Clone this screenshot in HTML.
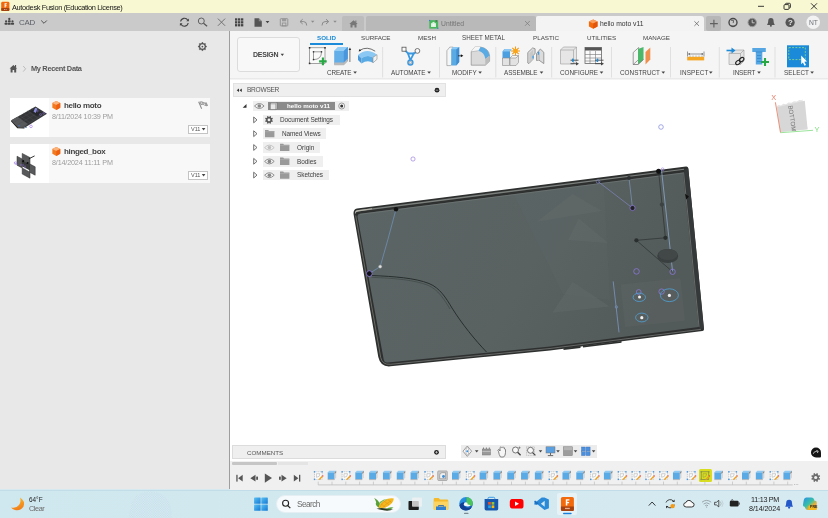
<!DOCTYPE html>
<html><head><meta charset="utf-8">
<style>
*{margin:0;padding:0;box-sizing:border-box}
html,body{width:828px;height:518px;overflow:hidden;background:#fff;font-family:"Liberation Sans",sans-serif;}
.a{position:absolute}
.t{position:absolute;white-space:nowrap;line-height:1;will-change:transform}
#title{left:0;top:0;width:828px;height:13px;background:#f8f8d3}
#tool{left:0;top:13px;width:828px;height:18px;background:#cacaca}
#left{left:0;top:31px;width:229px;height:459px;background:#e8e8e8}
#ldiv{left:229px;top:31px;width:1.200px;height:459px;background:#9e9e9e}
#ribbon{left:230px;top:31px;width:598px;height:46.500px;background:#f5f5f5}
#task{left:0;top:489px;width:828px;height:29px;background:#d6e9f0}
</style></head><body>
<div class="a" id="title"></div>
<div class="a" id="tool"></div>
<div class="a" id="left"></div>
<div class="a" id="ldiv"></div>
<div class="a" id="ribbon"></div>
<div class="a" id="task"></div>
<svg class="a" style="left:0;top:0" width="828" height="14" viewBox="0 0 828 14">
<rect x="1.2" y="1.8" width="8.2" height="9.2" rx="1.4" fill="#f2690d"/>
<rect x="1.2" y="8" width="8.2" height="3" rx="0.8" fill="#a5410f"/>
<path d="M4.6 3.2h2.2v1h-1.2v1h1v1h-1v1.4h-1z" fill="#fff"/>
<rect x="4" y="9" width="1" height="0.9" fill="#e8b090"/><rect x="5.6" y="9" width="1" height="0.9" fill="#e8b090"/>
<path d="M758 6.3h6" stroke="#222" stroke-width="0.9" fill="none"/>
<rect x="784" y="4.6" width="5" height="4.8" rx="1" fill="none" stroke="#222" stroke-width="0.9"/>
<path d="M785.5 4.4v-0.3q0-0.8 0.8-0.8h3.2q0.9 0 0.9 0.9v3q0 0.8-0.8 0.8h-0.4" fill="none" stroke="#222" stroke-width="0.9"/>
<path d="M811 3.3l6 6M817 3.3l-6 6" stroke="#222" stroke-width="0.9" fill="none"/>
</svg>
<span class="t" style="left:12px;top:3.5px;font-size:7.4px;font-weight:400;color:#151515;letter-spacing:-0.341px;">Autodesk Fusion (Education License)</span>

<div class="a" style="left:341.5px;top:16px;width:22.5px;height:15px;background:#bcbcbc;border-radius:2px 2px 0 0"></div>
<div class="a" style="left:366px;top:16px;width:169.5px;height:15px;background:#b9b9b9;border-radius:2px 2px 0 0"></div>
<div class="a" style="left:536px;top:16px;width:168px;height:15px;background:#f3f3f3;border-radius:2px 3px 0 0"></div>
<div class="a" style="left:706.3px;top:16.3px;width:15px;height:14.3px;background:#b7b7b7;border-radius:2px"></div>
<svg class="a" style="left:0;top:13px" width="828" height="18" viewBox="0 13 828 18">
<!-- people icon -->
<g fill="#474747">
<circle cx="9.300" cy="19" r="1.150"/><rect x="7.900" y="20.300" width="2.800" height="2.100" rx="0.700"/>
<circle cx="6.100" cy="21.400" r="1.100"/><rect x="4.500" y="22.700" width="3.200" height="2.100" rx="0.700"/>
<rect x="7.900" y="22.900" width="2.800" height="1.900" rx="0.500"/>
<circle cx="12.500" cy="21.400" r="1.100"/><rect x="10.900" y="22.700" width="3.200" height="2.100" rx="0.700"/>
</g>
<path d="M41.2 20.5l2.8 2.8l2.800-2.800" fill="none" stroke="#505050" stroke-width="1"/>
<!-- refresh -->
<g fill="none" stroke="#444" stroke-width="1.1">
<path d="M180.6 21.5a3.9 3.9 0 0 1 7.2-1.3"/><path d="M188.2 23a3.9 3.9 0 0 1-7.2 1.3"/>
</g>
<path d="M188.9 18.6v2.6h-2.6z M179.9 25.9v-2.6h2.6z" fill="#444"/>
<!-- search -->
<circle cx="201.3" cy="21" r="3" fill="none" stroke="#555" stroke-width="0.9"/>
<path d="M203.5 23.3l3.6 3" stroke="#555" stroke-width="1.2"/>
<!-- X -->
<path d="M217.9 18.6l7.2 7.2M225.1 18.6l-7.2 7.2" stroke="#686868" stroke-width="0.9"/>
<!-- grid -->
<g fill="#444">
<rect x="235" y="18.3" width="2.3" height="2.3"/><rect x="238" y="18.3" width="2.3" height="2.3"/><rect x="241" y="18.3" width="2.3" height="2.3"/>
<rect x="235" y="21.2" width="2.3" height="2.3"/><rect x="238" y="21.2" width="2.3" height="2.3"/><rect x="241" y="21.2" width="2.3" height="2.3"/>
<rect x="235" y="24.1" width="2.3" height="2.3"/><rect x="238" y="24.1" width="2.3" height="2.3"/><rect x="241" y="24.1" width="2.3" height="2.3"/>
</g>
<!-- file -->
<path d="M254.5 18.2h4.3l3 3v5.6h-7.3z" fill="#555"/><path d="M258.8 18.2v3h3z" fill="#8a8a8a"/>
<path d="M265.6 21l1.9 2.2l1.9-2.2z" fill="#444"/>
<!-- save -->
<rect x="280.3" y="18.7" width="7.5" height="7.2" rx="0.6" fill="none" stroke="#8e8e8e" stroke-width="0.9"/>
<rect x="282" y="18.7" width="4.2" height="2.6" fill="#9a9a9a"/><rect x="282.3" y="23" width="3.6" height="2.9" fill="none" stroke="#8e8e8e" stroke-width="0.8"/>
<!-- undo -->
<path d="M302.7 19.2l-2.7 2.4l2.7 2.4M300.3 21.6h3.4q3 0 3 3.9" fill="none" stroke="#8a8a8a" stroke-width="1"/>
<path d="M311 20.8l1.7 2l1.7-2z" fill="#8a8a8a"/>
<!-- redo -->
<path d="M326 19.2l2.7 2.4l-2.7 2.4M328.4 21.6h-3.4q-3 0-3 3.9" fill="none" stroke="#8a8a8a" stroke-width="1"/>
<path d="M333.3 20.8l1.7 2l1.7-2z" fill="#8a8a8a"/>
<!-- home tab icon -->
<path d="M349.3 24l4.2-3.7l4.2 3.7h-1.2v3.5h-2v-2.3h-2v2.3h-2v-3.5z" fill="#777"/><rect x="355.3" y="20.5" width="1.1" height="2" fill="#777"/>
<!-- untitled icon -->
<rect x="429.3" y="20.2" width="8.8" height="8.4" fill="#49b75e"/>
<path d="M431 27v-3.5l2.5-1.8l2.5 1.8v3.5z" fill="#d8f0dc"/><rect x="432.6" y="24" width="1.8" height="1.8" fill="#f8f8f8"/>
<rect x="429" y="19.9" width="1.2" height="1.2" fill="#3b7fd0"/><rect x="437.2" y="27.6" width="1.2" height="1.2" fill="#3b7fd0"/><rect x="435.5" y="20.2" width="1.6" height="1.6" fill="#666"/>
<path d="M525 21l4.8 4.8M529.8 21l-4.8 4.8" stroke="#7a7a7a" stroke-width="0.7"/>
<!-- active tab cube -->
<path d="M593.2 19.4l4.3 2v5l-4.3 2.3l-4.3-2.3v-5z" fill="#f26a0c"/>
<path d="M593.2 19.4l4.3 2l-4.3 2.2l-4.3-2.2z" fill="#f9a060"/><path d="M593.2 23.6l4.3-2.2v5l-4.3 2.3z" fill="#e2550a"/>
<path d="M694.4 21.3l4.6 4.6M699 21.3l-4.6 4.6" stroke="#555" stroke-width="0.7"/>
<!-- plus -->
<path d="M710 23.600h7.800M713.900 19.700v7.800" stroke="#606060" stroke-width="1.150"/>
<!-- extension icon -->
<circle cx="733" cy="22.500" r="4" fill="none" stroke="#484848" stroke-width="1.400"/>
<path d="M731 20.2l2.6 0.3l-0.4 2.6M735.8 24.5a3 3 0 0 1-4.5 1" fill="none" stroke="#555" stroke-width="0.9"/>
<!-- clock -->
<circle cx="752.2" cy="22.5" r="4.2" fill="#555" stroke="#9a9a9a" stroke-width="1"/>
<path d="M752.2 19.8v3h2.4" fill="none" stroke="#cfcfcf" stroke-width="0.9"/>
<!-- bell -->
<path d="M770.9 18q2.7 0 2.7 3.2q0 2.5 1.2 3.7h-7.8q1.2-1.2 1.2-3.7q0-3.2 2.7-3.2z" fill="#555"/><circle cx="770.9" cy="25.8" r="1" fill="#555"/>
<!-- help -->
<circle cx="790.1" cy="22.4" r="4.6" fill="#555"/>
<!-- NT -->
<circle cx="813.2" cy="22.2" r="6.8" fill="#f2f2f2"/>
</svg>
<span class="t" style="left:787.7px;top:19.2px;font-size:7.86px;font-weight:700;color:#ececec;">?</span>
<span class="t" style="left:808.8px;top:19.8px;font-size:6.75px;font-weight:400;color:#6e7378;">NT</span>
<span class="t" style="left:19px;top:18.6px;font-size:7.9px;font-weight:400;color:#5a5f66;letter-spacing:-0.191px;">CAD</span>
<span class="t" style="left:441px;top:21.3px;font-size:6.78px;font-weight:400;color:#747474;">Untitled</span>
<span class="t" style="left:600px;top:21.3px;font-size:6.77px;font-weight:400;color:#333;">hello moto v11</span>

<div class="a" style="left:10px;top:98px;width:200px;height:39px;background:#f8f8f8"></div>
<div class="a" style="left:10px;top:98px;width:39px;height:39px;background:#fff"></div>
<div class="a" style="left:10px;top:144px;width:200px;height:39px;background:#f8f8f8"></div>
<div class="a" style="left:10px;top:144px;width:39px;height:39px;background:#fff"></div>
<div class="a" style="left:187.5px;top:124.5px;width:20px;height:9.5px;background:#fff;border:0.8px solid #c4c4c4"></div>
<div class="a" style="left:187.5px;top:170.5px;width:20px;height:9.5px;background:#fff;border:0.8px solid #c4c4c4"></div>
<svg class="a" style="left:0;top:31px" width="230" height="160" viewBox="0 31 230 160">
<!-- gear -->
<path d="M202.40 42.10L203.64 43.61L205.58 43.42L205.39 45.36L206.90 46.60L205.39 47.84L205.58 49.78L203.64 49.59L202.40 51.10L201.16 49.59L199.22 49.78L199.41 47.84L197.90 46.60L199.41 45.36L199.22 43.42L201.16 43.61z" fill="#505050" stroke="#505050" stroke-width="0.3" stroke-linejoin="round"/><circle cx="202.4" cy="46.6" r="2.25" fill="#e8e8e8"/><circle cx="202.4" cy="46.6" r="0.90" fill="#505050"/>
<!-- home -->
<path d="M9.6 68.6l3.8-3.6l3.8 3.6h-1v3.8h-2v-2.4h-1.6v2.4h-2v-3.8z" fill="#555"/><rect x="15" y="65" width="1.1" height="2.2" fill="#555"/>
<path d="M23.2 66l2.4 2.8l-2.4 2.8" fill="none" stroke="#b0b0b0" stroke-width="0.8"/>
<!-- cubes -->
<g id="cube1" transform="translate(56.300 105.500) scale(0.900) translate(-56.300 -105.400)"><path d="M56.3 100.4l4.4 2.1v5.4l-4.4 2.5l-4.4-2.5v-5.4z" fill="#f47a20"/>
<path d="M56.3 100.4l4.4 2.1l-4.4 2.3l-4.4-2.3z" fill="#fbb37c"/><path d="M56.3 104.8l4.4-2.3v5.4l-4.4 2.5z" fill="#ee5f10"/></g>
<use href="#cube1" y="46"/>
<!-- flag -->
<path d="M198.2 102l0.9-0.4l3 7l-0.9 0.4z" fill="#888"/>
<path d="M199.3 101.8q2-1.2 3.6 0q1.6 1.2 3.6 0.4l1.6 3.6q-2 0.9-3.6-0.3q-1.6-1.2-3.6-0.2z" fill="#9a9a9a"/>
<path d="M200.6 102.2l1.4 0.2l0.6 1.4l-1.5-0.1zM203.3 103.2l1.6 0.6l0.6 1.4l-1.5-0.5z" fill="#e4e4e4"/>
<!-- dropdown arrows -->
<path d="M201.8 128l1.8 2.4l1.8-2.4z" fill="#444"/><path d="M201.8 174l1.8 2.4l1.8-2.4z" fill="#444"/>
<!-- thumb 1 -->
<path d="M11.400 120.200L35.500 106.400L47 113.800L25 127.600L18 127.300z" fill="#343537"/>
<path d="M11.400 120.200L17.500 116.700l10.500 7.200l-4 3.500l-6-0.300z" fill="#58595b"/>
<path d="M11.400 120.200l6.600 7.100l6 0.300l0.600 0.800l-7.300-0.200l-6.300-7z" fill="#1e1e1e"/>
<g stroke="#4c4d50" stroke-width="0.450" fill="none"><path d="M19.500 115.500l10.500 7.200M23.500 113.200l10.500 7.200M27.500 110.900l10.500 7.200M31.500 108.600l10.500 7.200M14.500 122l21-12.200M18 124.500l22-12.800M22 127l22-12.800"/></g>
<path d="M30 111.500l5-3l7 4.500l-5 3z" fill="#26272a"/>
<path d="M33.500 111.500l1.700-3.700l2.200 0.700l-1.700 4.400z" fill="#8c8fd8"/>
<circle cx="40.500" cy="114.500" r="1" fill="none" stroke="#8a6fd6" stroke-width="0.500"/><circle cx="43.800" cy="113.300" r="0.900" fill="none" stroke="#8a6fd6" stroke-width="0.500"/><circle cx="37.500" cy="111" r="0.800" fill="none" stroke="#8a6fd6" stroke-width="0.500"/>
<circle cx="31" cy="126.400" r="1.300" fill="none" stroke="#a070e8" stroke-width="0.600"/>
<circle cx="19" cy="125.800" r="0.800" fill="#4a6fb0"/><circle cx="26" cy="127.400" r="0.700" fill="#4a6fb0"/>
<!-- thumb 2 -->
<path d="M21.500 160l8.500 4.500v6l-8.500-4.500z" fill="#3a3b3d"/>
<g fill="#58595b" stroke="#2a2a2a" stroke-width="0.500">
<path d="M22.200 153.400l7.800 4.200v7.200l-7.800-4.200z"/>
<path d="M17 156.200l5.200 2.800v9l-5.200-2.800z"/>
<path d="M29.500 163.800l5.700 3v8.400l-5.700-3z"/>
<path d="M22.200 168l7.800 4.200v6l-7.800-4.200z"/>
</g>
<path d="M28.800 158.800l5.800-2.900" stroke="#1c1c1c" stroke-width="0.900"/>
<circle cx="23.200" cy="161.200" r="1.100" fill="#0c0c0c"/><circle cx="27.600" cy="163" r="1.100" fill="#0c0c0c"/>
<path d="M14.500 162q0.500 2.500 3 2.500M20 165h4M25 165.500v3" stroke="#9a78e8" stroke-width="0.600" fill="none"/>
<circle cx="15.500" cy="163" r="1.300" fill="none" stroke="#a080f0" stroke-width="0.500"/>
</svg>
<span class="t" style="left:31px;top:65px;font-size:7.4px;font-weight:700;color:#555;letter-spacing:-0.316px;">My Recent Data</span>
<span class="t" style="left:64px;top:102.2px;font-size:8px;font-weight:700;color:#444;letter-spacing:-0.316px;">hello moto</span>
<span class="t" style="left:51.8px;top:113.3px;font-size:7.2px;font-weight:400;color:#9c9c9c;letter-spacing:-0.183px;">8/11/2024 10:39 PM</span>
<span class="t" style="left:64px;top:148.2px;font-size:8px;font-weight:700;color:#444;letter-spacing:-0.366px;">hinged_box</span>
<span class="t" style="left:51.8px;top:159.3px;font-size:7.2px;font-weight:400;color:#9c9c9c;letter-spacing:-0.164px;">8/14/2024 11:11 PM</span>
<span class="t" style="left:190.8px;top:127.2px;font-size:5.51px;font-weight:400;color:#555;">V11</span>
<span class="t" style="left:190.8px;top:173.2px;font-size:5.51px;font-weight:400;color:#555;">V11</span>

<div class="a" style="left:230px;top:77.500px;width:598px;height:2.800px;background:linear-gradient(#f0f0f0,#e6e6e6 40%,#fdfdfd)"></div>
<div class="a" style="left:237px;top:37px;width:62.5px;height:35px;background:#f8f8f8;border:0.8px solid #dcdcdc;border-radius:3px"></div>
<div class="a" style="left:309.6px;top:43px;width:33.3px;height:1.9px;background:#1b8ad8"></div>
<svg class="a" style="left:230px;top:31px" width="598" height="50" viewBox="230 31 598 50">
<g stroke="#dedede" stroke-width="0.9">
<path d="M382.6 47v30.500M439.500 47v30.500M495.800 47v30.500M551.700 47v30.500M611.500 47v30.500M670.500 47v30.500M719.300 47v30.500M775 47v30.500"/>
</g>
<g fill="#444">
<path d="M280.6 53.8l1.7 2.1l1.7-2.1z"/>
<path d="M353.3 71.500l1.800 2.200l1.800-2.200z"/><path d="M427.3 71.500l1.800 2.200l1.800-2.200z"/><path d="M478.3 71.500l1.800 2.200l1.800-2.200z"/>
<path d="M539.7 71.500l1.800 2.200l1.800-2.200z"/><path d="M599.7 71.500l1.800 2.200l1.800-2.200z"/><path d="M661.5 71.500l1.800 2.200l1.800-2.200z"/>
<path d="M709.0 71.500l1.800 2.200l1.800-2.200z"/><path d="M757.2 71.500l1.800 2.200l1.800-2.200z"/><path d="M810.3 71.500l1.800 2.200l1.800-2.200z"/>
</g>
<!-- 1 create sketch -->
<rect x="309.600" y="47.800" width="15.400" height="15.600" fill="#fafafa" stroke="#6a6a6a" stroke-width="0.600"/>
<g fill="#333"><rect x="308.8" y="47" width="1.6" height="1.6"/><rect x="324.2" y="47" width="1.6" height="1.6"/><rect x="308.8" y="62.6" width="1.6" height="1.6"/></g>
<path d="M313.500 51.800h8q0 7.800-8 7.800z" fill="none" stroke="#666" stroke-width="0.650"/><g fill="#333"><rect x="312.800" y="51.100" width="1.400" height="1.400"/><rect x="320.800" y="51.100" width="1.400" height="1.400"/><rect x="312.800" y="58.900" width="1.400" height="1.400"/></g>
<path d="M322.9 57.6v7.6M319.1 61.4h7.6" stroke="#27a844" stroke-width="2.1"/>
<!-- 2 extrude -->
<path d="M334.200 51l4-4h9.600v13.600l-4 4h-9.600z" fill="#62aee8"/>
<path d="M334.200 51l4-4h9.600l-4 4z" fill="#94cef6"/><path d="M343.800 51l4-4v13.600l-4 4z" fill="#4a96dc"/>
<path d="M334.2 62.6h9.6l4-4v2.6l-4 4h-9.6z" fill="#b9b9b9"/>
<path d="M349.9 49v13" stroke="#444" stroke-width="0.7"/><path d="M348.6 50l1.3-2.4l1.3 2.4z" fill="#333"/>
<!-- 3 revolve -->
<path d="M358 55Q367 47.200 377 54.700L373 57.400Q367.500 54 361.500 58.200z" fill="#8cc8f4"/>
<path d="M358 55L361.500 58.200V63.600L358 60z" fill="#4a98d8"/>
<path d="M361.500 58.200Q367.500 54 373 57.400V62.800Q367.500 59.400 361.500 63.600z" fill="#5aaae4"/>
<path d="M373 57.400L377 54.700V59.300L373 62.800z" fill="#f2f2f2" stroke="#8a8a8a" stroke-width="0.600"/>
<path d="M359.800 50.300Q367 45.800 375.200 51.200" fill="none" stroke="#333" stroke-width="0.700"/><path d="M358.600 51.400l1-2.500l1.600 1.900z" fill="#222"/>
<!-- 4 automate -->
<g fill="none" stroke="#3a98e0" stroke-width="1.800" stroke-linejoin="round" stroke-linecap="round"><path d="M405.300 50.600L408.300 53.600M416 52.200L413.500 53.600"/><path d="M408 53.500L413.800 53.300L410.400 60.200z" fill="#fafafa"/></g>
<rect x="402" y="47.200" width="4" height="4" fill="#fafafa" stroke="#555" stroke-width="0.800"/>
<circle cx="417.400" cy="50.900" r="2.400" fill="#fafafa" stroke="#555" stroke-width="0.800"/>
<circle cx="410.400" cy="62.500" r="2.500" fill="#e4e8ec" stroke="#3a98e0" stroke-width="1.400"/><circle cx="410.400" cy="62.500" r="1.200" fill="none" stroke="#777" stroke-width="0.500"/>
<!-- 5 press pull -->
<path d="M446.900 50.700l2.900-3.600h3.400v15.500l-2.600 3h-3.700z" fill="#f6f6f6" stroke="#8a8a8a" stroke-width="0.600"/>
<path d="M451.200 49.300l2-2.200h6v15l-2.900 3.400h-5.100z" fill="#5aaae4"/><path d="M456.300 49.300l2.900-2.200v15l-2.900 3.400z" fill="#3f8ed2"/><path d="M451.200 49.300l2-2.200h6l-2.900 2.200z" fill="#8cc8f4"/>
<path d="M458 55.800h3.500" stroke="#222" stroke-width="0.800"/><path d="M460.800 54.300l2.500 1.500l-2.500 1.500z" fill="#111"/>
<!-- 6 fillet -->
<path d="M471.200 51.800L474.800 47.100H480.600Q488.800 48.500 489.600 55.800V61.200L485.300 65.200H471.200z" fill="#dadada" stroke="#808080" stroke-width="0.600"/>
<path d="M471.200 51.800L474.800 47.100H480.600L478.400 50.700z" fill="#f6f6f6"/>
<path d="M480.600 47.100Q488.800 48.500 489.600 55.800L485.300 59Q484.800 52.800 478.400 50.700z" fill="#5aaae4"/>
<path d="M485.300 59L489.600 55.800V61.200L485.300 65.200z" fill="#bcbcbc"/>
<path d="M471.200 51.800L478.400 50.700" stroke="#999" stroke-width="0.500" fill="none"/>
<!-- 7 new component -->
<path d="M502.500 51.500l2-2.500h7l-1.500 2.500v8h-7.500z" fill="#4a9fe0"/><path d="M502.500 51.500l2-2.500h7l-1.500 2.500z" fill="#8cc6f2"/>
<path d="M502.500 58h7v7.500h-7z M510 58h6l2.500-2.500v7l-2.500 3h-6z" fill="#e2e2e2" stroke="#8a8a8a" stroke-width="0.6"/>
<path d="M510 58l2.500-2.500h6" fill="none" stroke="#8a8a8a" stroke-width="0.6"/>
<g stroke="#f59a12" stroke-width="1.100"><path d="M515.500 46.500v9M511 51h9M512.300 47.800l6.400 6.400M518.700 47.800l-6.400 6.400"/></g><circle cx="515.500" cy="51" r="2.300" fill="#f9a51a"/>
<!-- 8 joint -->
<path d="M527.800 52.500L532.700 47.900L535.100 48.800V53.600L533 55.500V59.300L528.900 63.600L527.800 63z" fill="#dcdcdc" stroke="#858585" stroke-width="0.800" stroke-linejoin="round"/>
<path d="M529.300 53.200L533.300 49.400V59L529.300 62.800z" fill="#c8c8c8"/>
<path d="M536.500 53.600L540.300 49L543.800 52.300V63.600L538.900 60.100L536.500 60.500z" fill="#dcdcdc" stroke="#858585" stroke-width="0.800" stroke-linejoin="round"/>
<path d="M537.300 54.500L540 51.200V60L537.300 59.800z" fill="#c4c4c4"/>
<path d="M533.100 55.800v2.800M538.400 51.800v3" stroke="#3a9be8" stroke-width="1.300"/>
<!-- 9 configure -->
<path d="M560.500 50l3-3h13v14l-3 3h-13z" fill="#e6e6e6" stroke="#9a9a9a" stroke-width="0.600"/><path d="M560.500 50h13v14M573.500 50l3-3" fill="none" stroke="#9a9a9a" stroke-width="0.600"/>
<path d="M570.500 60.200h8M570.500 63.700h6" stroke="#444" stroke-width="0.900"/><path d="M576 61.900l3 1.800l-3 1.800z" fill="#444"/><rect x="572" y="58.500" width="1.600" height="3.400" rx="0.600" fill="#1b8ad8"/>
<!-- 10 configure table -->
<rect x="585" y="47.500" width="16.500" height="16" fill="#fafafa" stroke="#666" stroke-width="0.800"/><rect x="585" y="47.500" width="16.500" height="3" fill="#555"/>
<path d="M585 54.500h16.500M585 58h16.500M585 61h12M590 51v12.500M595.500 51v12.500" stroke="#777" stroke-width="0.600"/>
<path d="M595 60.200h8.500M595 63.700h6.500" stroke="#444" stroke-width="0.900"/><path d="M601 61.900l3 1.800l-3 1.800z" fill="#444"/><rect x="596.700" y="58.500" width="1.600" height="3.400" rx="0.600" fill="#1b8ad8"/>
<!-- 11 construct -->
<path d="M633.200 52.500l5.500-5v12l-5.500 5z" fill="#f4f4f4" stroke="#777" stroke-width="0.700"/>
<path d="M638 49l5.500-2v12.500l-5.500 5z" fill="#4cb86a"/><path d="M633.200 64.500h4.800l5.500-5" fill="none" stroke="#666" stroke-width="0.700"/>
<path d="M645.500 52l4.800-4.500v12l-4.800 5z" fill="#f0904e"/>
<!-- 12 inspect -->
<rect x="687.200" y="56.800" width="17" height="3.600" fill="#f5a623"/>
<path d="M687.500 51.500v5M704 51.500v5M688.500 54h14.500" stroke="#555" stroke-width="0.600"/><path d="M689.800 53l-1.800 1l1.800 1zM701.700 53l1.800 1l-1.800 1z" fill="#555"/>
<path d="M690 55.500v1.300M693 55.500v1.300M696 55.500v1.300M699 55.500v1.300M702 55.500v1.300" stroke="#777" stroke-width="0.500"/>
<!-- 13 insert derive -->
<path d="M729 53.500l3.500-3.500h11.500v11l-3.500 3.500h-11.500z" fill="#e4e4e4" stroke="#9a9a9a" stroke-width="0.600"/><path d="M729 53.500h11.500v11M740.500 53.500l3.500-3.500" fill="none" stroke="#9a9a9a" stroke-width="0.600"/>
<path d="M726.500 50.500h6" stroke="#1b8ad8" stroke-width="1.600"/><path d="M731.500 47.600l4 2.900l-4 2.900z" fill="#1b8ad8"/>
<g fill="none" stroke="#222" stroke-width="1.100"><ellipse cx="738" cy="62.500" rx="2.600" ry="1.800" transform="rotate(-40 738 62.500)"/><ellipse cx="741.600" cy="59.600" rx="2.600" ry="1.800" transform="rotate(-40 741.600 59.600)"/></g>
<!-- 14 insert mcmaster -->
<path d="M752.300 48h13.500v4h-3.500v12.500h-6.500v-12.500h-3.500z" fill="#56a6e4"/><path d="M755.800 52h6.500M757 55.500h4M757 58.500h4M757 61.500h4" stroke="#2f82c8" stroke-width="0.700"/>
<path d="M765 58v8M761 62h8" stroke="#27a844" stroke-width="2.100"/>
<!-- 15 select -->
<rect x="787" y="45.300" width="22" height="22" fill="#1b8ad8"/>
<rect x="788.800" y="47.600" width="16.500" height="12" fill="none" stroke="#8fdc8a" stroke-width="0.800" stroke-dasharray="2 1.300"/>
<path d="M801.200 55.500l5.800 6l-2.700 0.200l1.700 3.300l-1.500 0.700l-1.600-3.300l-1.700 1.800z" fill="#fff"/>
</svg>
<span class="t" style="left:252.5px;top:51.1px;font-size:7px;font-weight:700;color:#444;letter-spacing:-0.248px;">DESIGN</span>
<span class="t" style="left:316.5px;top:35.2px;font-size:6.22px;font-weight:700;color:#1b8ad8;">SOLID</span>
<span class="t" style="left:361px;top:35.2px;font-size:6.25px;font-weight:400;color:#444;">SURFACE</span>
<span class="t" style="left:417.7px;top:35.2px;font-size:6.23px;font-weight:400;color:#444;">MESH</span>
<span class="t" style="left:462.3px;top:35.2px;font-size:6.27px;font-weight:400;color:#444;">SHEET METAL</span>
<span class="t" style="left:533.2px;top:35.2px;font-size:6.24px;font-weight:400;color:#444;">PLASTIC</span>
<span class="t" style="left:586.7px;top:35.2px;font-size:6.26px;font-weight:400;color:#444;">UTILITIES</span>
<span class="t" style="left:642.9px;top:35.2px;font-size:6.23px;font-weight:400;color:#444;">MANAGE</span>
<span class="t" style="left:327px;top:70.2px;font-size:6.35px;font-weight:400;color:#444;letter-spacing:-0.137px;">CREATE</span>
<span class="t" style="left:391.2px;top:70.2px;font-size:6.35px;font-weight:400;color:#444;letter-spacing:-0.042px;">AUTOMATE</span>
<span class="t" style="left:451.7px;top:70.2px;font-size:6.35px;font-weight:400;color:#444;letter-spacing:0.001px;">MODIFY</span>
<span class="t" style="left:504px;top:70.2px;font-size:6.35px;font-weight:400;color:#444;letter-spacing:-0.105px;">ASSEMBLE</span>
<span class="t" style="left:560px;top:70.2px;font-size:6.35px;font-weight:400;color:#444;letter-spacing:-0.013px;">CONFIGURE</span>
<span class="t" style="left:620px;top:70.2px;font-size:6.35px;font-weight:400;color:#444;letter-spacing:0.017px;">CONSTRUCT</span>
<span class="t" style="left:679.5px;top:70.2px;font-size:6.35px;font-weight:400;color:#444;letter-spacing:0.163px;">INSPECT</span>
<span class="t" style="left:733px;top:70.2px;font-size:6.35px;font-weight:400;color:#444;letter-spacing:-0.135px;">INSERT</span>
<span class="t" style="left:784px;top:70.2px;font-size:6.35px;font-weight:400;color:#444;letter-spacing:0.059px;">SELECT</span>

<div class="a" style="left:232.5px;top:83.300px;width:213px;height:13.300px;background:#efefef;border:0.800px solid #e2e2e2"></div>
<div class="a" style="left:253.4px;top:100.500px;width:95.600px;height:10.600px;background:#efefef"></div>
<div class="a" style="left:267.8px;top:101.500px;width:67.200px;height:8.900px;background:#8b8b8b"></div>
<div class="a" style="left:263.2px;top:114.6px;width:76.6px;height:10.6px;background:#efefef"></div>
<div class="a" style="left:263.2px;top:128.4px;width:63.1px;height:10.6px;background:#efefef"></div>
<div class="a" style="left:263.2px;top:142.2px;width:56.8px;height:10.6px;background:#efefef"></div>
<div class="a" style="left:263.2px;top:156px;width:59.4px;height:10.6px;background:#efefef"></div>
<div class="a" style="left:263.2px;top:169.8px;width:66px;height:10.6px;background:#efefef"></div>
<svg class="a" style="left:230px;top:82px" width="220" height="102" viewBox="230 82 220 102">
<path d="M239 88.500v3.400l-2.300-1.700zM241.800 88.500v3.400l-2.300-1.700z" fill="#333"/>
<circle cx="437" cy="90.200" r="2.400" fill="#222"/><path d="M435.700 90.200h2.600" stroke="#ddd" stroke-width="0.600"/>
<path d="M246.500 104v3.800h-3.800z" fill="#333"/>
<g fill="#f8f8f8" stroke="#484848" stroke-width="0.750">
<path d="M253.700 117.0l3.300 2.900l-3.300 2.900z"/><path d="M253.700 130.8l3.300 2.900l-3.300 2.900z"/><path d="M253.700 144.6l3.300 2.900l-3.300 2.900z"/><path d="M253.700 158.4l3.300 2.900l-3.300 2.900z"/><path d="M253.700 172.2l3.300 2.900l-3.300 2.900z"/>
</g>
<!-- eyes -->
<g id="eye"><path d="M254.500 106q4.800-5 9.600 0q-4.800 5-9.600 0z" fill="#f4f4f4" stroke="#858585" stroke-width="0.900"/><circle cx="259.300" cy="106" r="1.800" fill="#858585"/></g>
<use href="#eye" x="10.100" y="55.400"/><use href="#eye" x="10.100" y="69.200"/>
<g opacity="0.450"><use href="#eye" x="10.100" y="41.600"/></g>
<!-- component icon -->
<path d="M270.300 103.800l1.200-1.300h5.500v5.800l-1.200 1.300h-5.500z" fill="#e8e8e8" stroke="#666" stroke-width="0.500"/><path d="M270.300 103.800h5.500v5.800M275.800 103.800l1.200-1.300" fill="none" stroke="#666" stroke-width="0.500"/>
<!-- radio -->
<circle cx="341.700" cy="106" r="3" fill="#fafafa" stroke="#777" stroke-width="0.700"/><circle cx="341.700" cy="106" r="1.500" fill="#333"/>
<!-- gear -->
<path d="M271.88 120.26L272.90 120.80L272.39 122.02L271.29 121.68L270.78 122.19L271.12 123.29L269.90 123.80L269.36 122.78L268.64 122.78L268.10 123.80L266.88 123.29L267.22 122.19L266.71 121.68L265.61 122.02L265.10 120.80L266.12 120.26L266.12 119.54L265.10 119.00L265.61 117.78L266.71 118.12L267.22 117.61L266.88 116.51L268.10 116.00L268.64 117.02L269.36 117.02L269.90 116.00L271.12 116.51L270.78 117.61L271.29 118.12L272.39 117.78L272.90 119.00L271.88 119.54z" fill="#555"/><circle cx="269" cy="119.900" r="1.400" fill="#efefef"/>
<!-- folders -->
<g id="fold"><path d="M265 130h3.200l0.800 1h5.400v6.300h-9.400z" fill="#999"/><rect x="265" y="131.600" width="9.400" height="0.500" fill="#b5b5b5"/></g>
<use href="#fold" x="15" y="13.800"/><use href="#fold" x="15" y="27.600"/><use href="#fold" x="15" y="41.400"/>
</svg>
<span class="t" style="left:246.8px;top:87.3px;font-size:6.6px;font-weight:400;color:#555;letter-spacing:-0.284px;">BROWSER</span>
<span class="t" style="left:286.6px;top:103.3px;font-size:6.2px;font-weight:700;color:#fff;">hello moto v11</span>
<span class="t" style="left:280px;top:117.1px;font-size:6.45px;font-weight:400;color:#3c3c3c;letter-spacing:-0.081px;">Document Settings</span>
<span class="t" style="left:282.4px;top:130.9px;font-size:6.45px;font-weight:400;color:#3c3c3c;letter-spacing:-0.088px;">Named Views</span>
<span class="t" style="left:296.5px;top:144.7px;font-size:6.45px;font-weight:400;color:#3c3c3c;letter-spacing:0.018px;">Origin</span>
<span class="t" style="left:296.5px;top:158.5px;font-size:6.45px;font-weight:400;color:#3c3c3c;letter-spacing:-0.045px;">Bodies</span>
<span class="t" style="left:296.5px;top:172.3px;font-size:6.45px;font-weight:400;color:#3c3c3c;letter-spacing:-0.062px;">Sketches</span>

<svg class="a" style="left:230px;top:82px" width="598" height="360" viewBox="230 82 598 360">
<defs>
<linearGradient id="surf" x1="0" y1="0" x2="1" y2="0.300"><stop offset="0" stop-color="#5c6565"/><stop offset="0.600" stop-color="#596161"/><stop offset="1" stop-color="#535a5a"/></linearGradient>
</defs>
<!-- outer frame -->
<path d="M357 208.500L686 166.600q2-0.200 2.300 1.600L704 329q0.100 1.800-1.600 2L550 350.400L390.500 366.300Q380.500 367.300 378.300 357L353.700 215q-1-5.500 3.300-6.500z" fill="#2e3030"/>
<!-- top highlight strip -->
<path d="M357 210.200L684 168.800l0.100 1L358 211.500q-2.500 0.300-3 2.500q-0.400-3.200 2-3.800z" fill="#7c807d"/>
<path d="M357 210.200L372 208.300l0.100 1L358 211.500q-2.500 0.300-3 2.500q-0.400-3.200 2-3.800z" fill="#b5b5ac"/>
<!-- right side band -->
<path d="M684.200 169.500L688.300 168.500L703.800 328.500L699.300 329z" fill="#353939"/>
<!-- inner surface -->
<path d="M359.800 213.800L683 172.400L698.500 327L550 346.400L387.500 362.500Q384.500 362.800 383.800 360L357.600 217q-0.400-2.800 2.200-3.200z" fill="url(#surf)"/>
<path d="M683.600 172.300L699 326.800" stroke="#808583" stroke-width="0.700" fill="none"/>
<path d="M360 214.300L683 173" stroke="#7a807e" stroke-width="0.500" fill="none"/>
<!-- left edge light line -->
<path d="M355.700 215.500L380.700 357.500Q382.300 365 390.500 364.300" stroke="#777870" stroke-width="0.800" fill="none"/>
<path d="M390.500 364.300L550 348.500L701 329.300" stroke="#8a8d8a" stroke-width="0.600" fill="none"/>
<!-- subtle lighter shapes -->
<path d="M572.600 194L537 221.700L602 211z M578.800 218.600L568 240L608 243z M572.600 282L552.500 312.700L609.600 306.500z" fill="#697171" opacity="0.300"/><path d="M514 195L563 294L610 300L604 183z" fill="#697171" opacity="0.100"/>
<rect x="622.700" y="281.400" width="60" height="42.600" fill="#626a6a" opacity="0.300" transform="rotate(-6 652 302)"/>
<!-- bottom tabs -->
<path d="M563.500 348.200L580.500 346.100v1.900L563.500 350.100zM583 345.800L621.500 341v1.800L583 347.600z" fill="#2e3030"/>
<!-- curve -->
<path d="M371.500 275.500C395 276.500 415 278 429 283.500C440 288 446 298 452 308C462 324 475 340 486.500 352" fill="none" stroke="#222828" stroke-width="0.900"/>
<path d="M371.500 277.300C395 278.300 414 279.800 428 285.300C438 289.500 444 299 450 309" fill="none" stroke="#3a4141" stroke-width="0.600"/>
<!-- sketch lines left -->
<path d="M396 209.300Q388 240 380.200 266.600L369.300 273.600" fill="none" stroke="#6f8fb5" stroke-width="0.800"/>
<circle cx="396" cy="209.300" r="2.200" fill="#111"/>
<circle cx="369.300" cy="273.600" r="2.900" fill="#111" stroke="#8a78d8" stroke-width="0.900"/>
<circle cx="380.200" cy="266.600" r="1.600" fill="#e0e0e0" stroke="#999" stroke-width="0.400"/>
<!-- sketch right -->
<g fill="none" stroke-width="0.700">
<path d="M598 181.500L632.500 208" stroke="#7f86c0"/>
<path d="M629 178L632.500 208" stroke="#7d97bd"/>
<path d="M658.600 171.200L665.400 237.800" stroke="#2c3030"/>
<path d="M661.500 170L672.600 271.800" stroke="#8fb2dc"/>
<path d="M636.400 240.300L665.400 237.800M636.400 240.300L672.600 271.800" stroke="#2c3030"/>
<path d="M613.200 281.400L619 332.400" stroke="#7f9fd0"/>
</g>
<ellipse cx="667.700" cy="256" rx="10.500" ry="7" fill="#3a3f3f"/><ellipse cx="668" cy="254.500" rx="9.500" ry="5.500" fill="#424848"/>
<circle cx="598" cy="181.500" r="1.800" fill="none" stroke="#7f86c0" stroke-width="0.600"/>
<circle cx="629" cy="178" r="2" fill="#2c3030"/>
<circle cx="658.600" cy="171.200" r="2.500" fill="#111"/><circle cx="662.600" cy="169.300" r="1.400" fill="none" stroke="#a080e0" stroke-width="0.600"/>
<circle cx="632.500" cy="208" r="2.600" fill="#222" stroke="#8a78d8" stroke-width="0.800"/>
<circle cx="661.900" cy="204.600" r="2.100" fill="#3c4141"/>
<circle cx="665.400" cy="237.800" r="2.100" fill="#2a2e2e"/><circle cx="636.400" cy="240.300" r="2.100" fill="#2a2e2e"/>
<circle cx="616.400" cy="307" r="1.200" fill="none" stroke="#7f9fd0" stroke-width="0.500"/>
<path d="M685 193.800l4 2.800l-2.800 2.800z" fill="#111"/>
<g fill="none" stroke="#8a78d8" stroke-width="0.800">
<circle cx="636.500" cy="271.400" r="2.800"/><circle cx="672.600" cy="271.800" r="2.700"/><circle cx="638.700" cy="292" r="2.400"/><circle cx="661.600" cy="291.600" r="2.700"/>
</g>
<g fill="none" stroke="#4fa3d8" stroke-width="0.800">
<ellipse cx="639.300" cy="297.300" rx="6.200" ry="4.200"/><ellipse cx="669.400" cy="295.200" rx="9" ry="6.400"/><ellipse cx="641.800" cy="317.500" rx="6.200" ry="4.400"/>
</g>
<circle cx="639.500" cy="297" r="1.500" fill="#f0f0f0"/><circle cx="669.400" cy="295.400" r="1.600" fill="#f0f0f0"/><circle cx="641.800" cy="317.700" r="1.600" fill="#f0f0f0"/>
<!-- floating circles -->
<circle cx="413" cy="159" r="2.100" fill="none" stroke="#9a80e0" stroke-width="0.700"/>
<circle cx="661" cy="127" r="2.300" fill="none" stroke="#7f86d8" stroke-width="0.700"/>
<!-- viewcube -->
<path d="M776.800 106.200L778.500 105l2.500 0.500l2.300-1.700l2.700 0.400l2.500-1.700l2.800 0.300l2.700-1.600l2.800 0.300l2.500-1.600l2.500 0.300l0.500-1.300L807.600 129.300L780.500 132z" fill="#e4e4e4"/>
<path d="M777 107.200L804.800 100.800L807.600 129.300L780.500 132z" fill="#d7d7d7"/>
<path d="M775.400 102.300L780.500 132.700" stroke="#e8836a" stroke-width="0.900"/>
<path d="M780.500 132.700L813 130.300" stroke="#8fe08f" stroke-width="0.900"/>
<text x="792.500" y="118.300" font-family="Liberation Sans, sans-serif" font-size="6.100" fill="#707070" text-anchor="middle" transform="rotate(82 792.500 118.300)" dominant-baseline="central">BOTTOM</text>
<text x="771.300" y="100" font-family="Liberation Sans, sans-serif" font-size="7.400" fill="#e8806a">X</text>
<text x="814.500" y="132" font-family="Liberation Sans, sans-serif" font-size="7.400" fill="#7fdc7f">Y</text>
</svg>

<div class="a" style="left:230px;top:461.400px;width:598px;height:28.600px;background:#f0f0f0"></div>
<div class="a" style="left:232.300px;top:445.400px;width:213.300px;height:13.600px;background:#efefef;border:0.800px solid #dcdcdc"></div>
<div class="a" style="left:232.300px;top:462.200px;width:45.200px;height:3.200px;background:#c6c6c6;border-radius:1px"></div>
<div class="a" style="left:277.500px;top:462.200px;width:30.500px;height:3.200px;background:#e4e4e4"></div>
<div class="a" style="left:461.300px;top:444.500px;width:136px;height:13.600px;background:#ececec"></div>
<div class="a" style="left:698.500px;top:469px;width:13px;height:13.400px;background:#d9dd1f;border-radius:1.500px"></div>
<svg class="a" style="left:230px;top:440px" width="598" height="50" viewBox="230 440 598 50">
<defs>
<g id="tS"><rect x="-3.700" y="-3.900" width="7.600" height="7.600" fill="#fdfdfd" stroke="#a8aeb4" stroke-width="0.600" stroke-dasharray="1.200 0.600"/><g fill="#4a98e0"><rect x="-4.400" y="-4.600" width="1.400" height="1.400"/><rect x="3.200" y="-4.600" width="1.400" height="1.400"/><rect x="-4.400" y="3" width="1.400" height="1.400"/></g><path d="M-1.800 -2h3.600q0 3.600-3.600 3.600z" fill="none" stroke="#a0a0a0" stroke-width="0.500"/><path d="M0.800 3l2.900-2.900l1 1l-2.900 2.900l-1.300 0.300z" fill="#f0a020"/><path d="M3.700 0.100l1 1l0.500-0.500q0.300-0.700-0.400-1z" fill="#e04040"/></g>
<g id="tH"><rect x="-3.700" y="-3.900" width="7.600" height="7.600" fill="none" stroke="#7a8050" stroke-width="0.700"/><g fill="#8a9a40"><rect x="-4.400" y="-4.600" width="1.400" height="1.400"/><rect x="3.200" y="-4.600" width="1.400" height="1.400"/><rect x="-4.400" y="3" width="1.400" height="1.400"/></g><path d="M-1.800 -2h3.600q0 3.600-3.600 3.600z" fill="none" stroke="#8a9050" stroke-width="0.500"/><path d="M0.800 3l2.900-2.900l1 1l-2.900 2.900l-1.300 0.300z" fill="#e8a020"/><path d="M3.700 0.100l1 1l0.500-0.500q0.300-0.700-0.400-1z" fill="#e04040"/></g>
<g id="tC"><rect x="-4.300" y="-3.400" width="6.900" height="7" fill="#5aaae6"/><path d="M-4.300 -3.400l1.600-1.600h6.900l-1.600 1.600z" fill="#8ecaf4"/><path d="M2.600 -3.400l1.600-1.600v7l-1.600 1.600z" fill="#d4d4d4"/><path d="M2.600 -3.400l1.600-1.600v1.800l-1.600 1.600z" fill="#8a8a8a"/><path d="M-4.300 3.900h6.900" stroke="#9a9a9a" stroke-width="0.600"/></g>
<g id="tF"><rect x="-4.800" y="-4.800" width="9.600" height="9.600" rx="1" fill="#c9c9c9" stroke="#8f8f8f" stroke-width="0.600"/><path d="M-2.800 3v-3.500q0-2.500 2.500-2.500h3.300v6z" fill="#efefef" stroke="#777" stroke-width="0.500"/><circle cx="1" cy="0.800" r="1.400" fill="#3b8fd8"/></g>
</defs>
<circle cx="436.500" cy="452.300" r="2.400" fill="#222"/><path d="M435.200 452.300h2.600M436.500 451v2.600" stroke="#eee" stroke-width="0.600"/>
<g fill="#555"><rect x="236.300" y="474.800" width="1.300" height="6.800"/><path d="M242.700 474.800v6.800l-4.600-3.400z"/><path d="M255.500 474.800v6.800l-5.200-3.400z"/><rect x="256.200" y="476.600" width="1.800" height="3.200"/><path d="M264.800 473.500l7.200 4.600l-7.200 4.600z"/><path d="M281.500 474.800v6.800l5.200-3.400z"/><rect x="279" y="476.600" width="1.800" height="3.200"/><path d="M293.800 474.800v6.800l4.600-3.400z"/><rect x="299" y="474.800" width="1.300" height="6.800"/></g>
<path d="M318.200 484.900H792.7" stroke="#c2c2c2" stroke-width="0.900" fill="none"/>
<path d="M318.2 481.600v3.300M332.0 481.600v3.300M345.8 481.600v3.300M359.6 481.600v3.300M373.4 481.600v3.300M387.2 481.600v3.300M401.1 481.600v3.300M414.9 481.600v3.300M428.7 481.600v3.300M442.5 481.600v3.300M456.3 481.600v3.300M470.1 481.600v3.300M483.9 481.600v3.300M497.7 481.600v3.300M511.5 481.600v3.300M525.4 481.600v3.300M539.2 481.600v3.300M553.0 481.600v3.300M566.8 481.600v3.300M580.6 481.600v3.300M594.4 481.600v3.300M608.2 481.600v3.300M622.0 481.600v3.300M635.8 481.600v3.300M649.6 481.600v3.300M663.5 481.600v3.300M677.3 481.600v3.300M691.1 481.600v3.300M704.9 481.600v3.300M718.7 481.600v3.300M732.5 481.600v3.300M746.3 481.600v3.300M760.1 481.600v3.300M773.9 481.600v3.300M787.7 481.600v3.300" stroke="#bdbdbd" stroke-width="0.700" fill="none"/>
<path d="M794.2 484.500h4" stroke="#aaa" stroke-width="0.800" stroke-dasharray="0.800 0.800"/>
<use href="#tS" x="318.20" y="475.700"/>
<use href="#tC" x="332.01" y="475.700"/>
<use href="#tS" x="345.82" y="475.700"/>
<use href="#tC" x="359.63" y="475.700"/>
<use href="#tC" x="373.44" y="475.700"/>
<use href="#tC" x="387.25" y="475.700"/>
<use href="#tC" x="401.06" y="475.700"/>
<use href="#tC" x="414.87" y="475.700"/>
<use href="#tS" x="428.68" y="475.700"/>
<use href="#tF" x="442.49" y="475.700"/>
<use href="#tC" x="456.30" y="475.700"/>
<use href="#tS" x="470.11" y="475.700"/>
<use href="#tC" x="483.92" y="475.700"/>
<use href="#tC" x="497.73" y="475.700"/>
<use href="#tC" x="511.54" y="475.700"/>
<use href="#tC" x="525.35" y="475.700"/>
<use href="#tC" x="539.16" y="475.700"/>
<use href="#tS" x="552.97" y="475.700"/>
<use href="#tC" x="566.78" y="475.700"/>
<use href="#tC" x="580.59" y="475.700"/>
<use href="#tS" x="594.40" y="475.700"/>
<use href="#tC" x="608.21" y="475.700"/>
<use href="#tS" x="622.02" y="475.700"/>
<use href="#tS" x="635.83" y="475.700"/>
<use href="#tS" x="649.64" y="475.700"/>
<use href="#tS" x="663.45" y="475.700"/>
<use href="#tC" x="677.26" y="475.700"/>
<use href="#tS" x="691.07" y="475.700"/>
<use href="#tH" x="704.88" y="475.700"/>
<use href="#tC" x="718.69" y="475.700"/>
<use href="#tS" x="732.50" y="475.700"/>
<use href="#tC" x="746.31" y="475.700"/>
<use href="#tC" x="760.12" y="475.700"/>
<use href="#tS" x="773.93" y="475.700"/>
<use href="#tC" x="787.74" y="475.700"/>
<path d="M818.97 477.91L820.08 478.52L819.52 479.88L818.31 479.52L817.72 480.11L818.08 481.32L816.72 481.88L816.11 480.77L815.29 480.77L814.68 481.88L813.32 481.32L813.68 480.11L813.09 479.52L811.88 479.88L811.32 478.52L812.43 477.91L812.43 477.09L811.32 476.48L811.88 475.12L813.09 475.48L813.68 474.89L813.32 473.68L814.68 473.12L815.29 474.23L816.11 474.23L816.72 473.12L818.08 473.68L817.72 474.89L818.31 475.48L819.52 475.12L820.08 476.48L818.97 477.09z" fill="#6a6a6a"/><circle cx="815.700" cy="477.500" r="1.600" fill="#f0f0f0"/>
<path d="M816 447.500a5 5 0 0 1 5 5v4q0 1-1 1h-4a5 5 0 0 1 0-10z" fill="#161616"/><path d="M813.300 453.800q0.600-2.600 3.300-2.400l1.400 1.200M816.300 450.600l1.900 0.400l-0.600 1.700" fill="none" stroke="#d8d8d8" stroke-width="0.800"/>
<g fill="#444"><path d="M474.900 450.300l1.800 2.100l1.800-2.100z"/><path d="M538.700 450.300l1.800 2.100l1.800-2.100z"/><path d="M556.200 450.300l1.800 2.100l1.800-2.100z"/><path d="M573.700 450.300l1.800 2.100l1.800-2.100z"/><path d="M591.800 450.300l1.800 2.100l1.800-2.100z"/></g>
<path d="M467.300 446l4.300 5.200l-4.300 5.200l-4.300-5.200z" fill="#fafafa" stroke="#777" stroke-width="0.700"/><ellipse cx="467.300" cy="451.200" rx="1.500" ry="3.600" fill="none" stroke="#888" stroke-width="0.500"/><circle cx="467.300" cy="451.200" r="1" fill="#3b8fd8"/>
<rect x="482.300" y="449" width="8.200" height="6" fill="#999" stroke="#777" stroke-width="0.500"/><path d="M483.500 449v-1.500M486.400 449v-1.500M489.300 449v-1.500" stroke="#777" stroke-width="0.900"/><path d="M482.300 451.500h8.200" stroke="#ddd" stroke-width="0.500"/>
<path d="M498.500 451.500q-1.300-1.500 0-2q1 0 1.500 1.500v-3.500q0.700-0.900 1.300 0q0.700-1.300 1.500 0q0.800-1 1.500 0.300v1.200q0.800-0.600 1.200 0.500v3q0 3-1.800 4.500h-3.200q-1.500-2-2-5.500z" fill="#f6f6f6" stroke="#555" stroke-width="0.700"/>
<circle cx="515.500" cy="450" r="3" fill="#f8f8f8" stroke="#555" stroke-width="0.800"/><path d="M517.600 452.300l3 3" stroke="#444" stroke-width="1.300"/><path d="M519.500 446.500v2.400M518.300 447.700h2.400" stroke="#555" stroke-width="0.500"/>
<rect x="526.500" y="446.800" width="8" height="8.600" fill="none" stroke="#999" stroke-width="0.500" stroke-dasharray="1 0.700"/><circle cx="530.500" cy="450.300" r="3" fill="#f8f8f8" stroke="#555" stroke-width="0.800"/><path d="M532.600 452.600l2.800 2.800" stroke="#444" stroke-width="1.300"/>
<rect x="546" y="446.800" width="9" height="6.200" fill="#5a9fe0" stroke="#777" stroke-width="0.500"/><path d="M550.500 453v2M547.800 455.600h5.400" stroke="#666" stroke-width="1"/>
<rect x="563.500" y="446.800" width="8.800" height="8.800" fill="#9c9c9c" stroke="#777" stroke-width="0.500"/><rect x="563.800" y="447.100" width="8.200" height="3" fill="#b5b5b5"/>
<g fill="#4a8fe0" stroke="#3a6fb0" stroke-width="0.400"><rect x="581.500" y="447" width="3.900" height="3.900"/><rect x="586.200" y="447" width="3.900" height="3.900"/><rect x="581.500" y="451.700" width="3.900" height="3.900"/><rect x="586.200" y="451.700" width="3.900" height="3.900"/></g>
</svg>
<span class="t" style="left:246.8px;top:449.5px;font-size:6.21px;font-weight:400;color:#555;">COMMENTS</span>

<div class="a" style="left:0;top:489.800px;width:828px;height:28.200px;background:linear-gradient(90deg,#cfe7ee,#d2e9ef 50%,#d6eaf1)"></div><div class="a" style="left:0;top:489.800px;width:828px;height:1.200px;background:#c3dde8"></div>
<div class="a" style="left:275.900px;top:495.200px;width:125px;height:17.400px;background:#f6fafc;border-radius:8.700px;border:0.500px solid #e4eef3"></div>
<div class="a" style="left:556.500px;top:492.600px;width:20.700px;height:22.400px;background:#e7f2f7;border-radius:2px"></div>
<svg class="a" style="left:0;top:489px" width="828" height="29" viewBox="0 489 828 29">
<defs>
<pattern id="dots" width="2.400" height="2.400" patternUnits="userSpaceOnUse"><rect width="2.400" height="2.400" fill="#d7ebf1"/><rect x="0.300" y="0.300" width="0.900" height="0.900" fill="#b4d2e6"/><rect x="1.500" y="1.500" width="0.900" height="0.900" fill="#c2dcea"/></pattern>
<linearGradient id="win" x1="0" y1="0" x2="1" y2="1"><stop offset="0" stop-color="#58c0f2"/><stop offset="1" stop-color="#1478d4"/></linearGradient>
<linearGradient id="edge" x1="0" y1="0" x2="1" y2="1"><stop offset="0" stop-color="#2fa0ea"/><stop offset="0.550" stop-color="#1c78d0"/><stop offset="1" stop-color="#144aa0"/></linearGradient>
<linearGradient id="moon" x1="0" y1="0" x2="0.300" y2="1"><stop offset="0" stop-color="#fbc02d"/><stop offset="1" stop-color="#f2801a"/></linearGradient>
<linearGradient id="cop" x1="0" y1="0" x2="1" y2="1"><stop offset="0" stop-color="#2a8fe8"/><stop offset="0.450" stop-color="#36c0a8"/><stop offset="0.700" stop-color="#f0b030"/><stop offset="1" stop-color="#e04898"/></linearGradient>
</defs>
<path d="M129 518C129.500 500 136 491.500 150.500 491.500C165 491.500 171.500 500 172 518z" fill="url(#dots)"/>
<!-- moon -->
<path d="M20 497.500q5.500 3.500 3.500 9q-2.500 4.500-8.500 3.500q-3-0.800-3.800-2.600q5 1.200 7.800-2.400q2.400-3.500 1-7.500z" fill="url(#moon)"/>
<!-- start -->
<g fill="url(#win)"><rect x="254.100" y="497.600" width="6.500" height="6.200" rx="0.500"/><rect x="261.300" y="497.600" width="6.500" height="6.200" rx="0.500"/><rect x="254.100" y="504.500" width="6.500" height="6.200" rx="0.500"/><rect x="261.300" y="504.500" width="6.500" height="6.200" rx="0.500"/></g>
<!-- search icon -->
<circle cx="285.600" cy="503.300" r="3" fill="none" stroke="#222" stroke-width="1.100"/><path d="M287.800 505.600l2.500 2.500" stroke="#222" stroke-width="1.200"/>
<!-- corn -->
<path d="M374.200 498q3.800 1.500 5.600 5.800q-0.600 2.600 1.200 4.600q-4.200-0.800-5.400-4.600q1.600-0.800-1.400-5.800z" fill="#5aa03a"/>
<path d="M376.500 508.800q5-1.600 9.500-0.200q4 1.200 7.500 0.400q-3.500 2.200-8.500 1.600q-4.500-0.600-8.500-1.800z" fill="#2c3a20"/>
<path d="M378.500 507.600q1-5 7.500-8q4.500-2 7.800-1.200q-0.400 4.600-5.800 7.800q-5 2.800-9.500 1.400z" fill="#f4b81e"/>
<path d="M380 507q1.500-4.500 7-7.300M382.800 507.800q2.400-4 8.400-7M381 503.800l4.500 3.600M384.300 501.400l4.800 3.400M387.800 499.600l4 3" stroke="#e08a10" stroke-width="0.450" fill="none"/>
<path d="M379 505q3.500-4.500 9-6.200q-5 0.200-8.200 3.200q-1.200 1.400-0.800 3z" fill="#7ab848"/>
<path d="M386 509q3.500-2.400 7.500-1.400q-2 2.400-7.500 1.400z" fill="#5aa03a"/>
<!-- task view -->
<rect x="408.500" y="501" width="10.300" height="9" rx="0.800" fill="#1c1c1c"/><rect x="412" y="497.500" width="10" height="9.200" rx="0.800" fill="#f2f2f2" fill-opacity="0.780"/>
<!-- explorer -->
<path d="M433.700 499.200q0-1.200 1.200-1.200h3.800l1.300 1.600h7q1.300 0 1.300 1.200v8q0 1.200-1.300 1.200h-12.100q-1.200 0-1.200-1.200z" fill="#f6b92a"/>
<path d="M433.700 501.500h14.600v7.300q0 1.200-1.300 1.200h-12.100q-1.200 0-1.200-1.200z" fill="#fcd462"/>
<path d="M436 506.500h10v3.500h-10z" fill="#2f7fd4"/><path d="M438.500 506.500v-1h5v1" fill="none" stroke="#1f5fa8" stroke-width="0.800"/>
<!-- edge -->
<circle cx="466" cy="503.700" r="6.800" fill="url(#edge)"/>
<path d="M466.500 496.900a6.800 6.800 0 0 1 6.300 7.600q-1 2-4.400 1.400l-2.200-2.300q0.600-3.400 0.300-6.700z" fill="#4cc45c"/>
<path d="M459.400 505.500q1 4.600 6 5q4.500 0 6.500-3.500q-3.500 2-6.500 0q-2.500-2-1-5q-4 0.500-5 3.500z" fill="#123f94"/>
<circle cx="465.800" cy="504.200" r="1.900" fill="#f4f8fa"/><path d="M465 505.500q2.500 1.800 5.500 0.300l-1.500-1.300z" fill="#f4f8fa"/>
<rect x="464" y="512.800" width="4.500" height="1.200" rx="0.600" fill="#7a8a92"/>
<!-- store -->
<path d="M484.600 499h13.600v9.800q0 1.600-1.600 1.600h-10.400q-1.600 0-1.600-1.600z" fill="#1858ac"/><path d="M488 499.200v-0.700q0-1.200 1.200-1.200h4.400q1.200 0 1.200 1.200v0.700" fill="none" stroke="#3a9ae8" stroke-width="1"/>
<rect x="488.200" y="502" width="2.700" height="2.700" fill="#f25022"/><rect x="491.600" y="502" width="2.700" height="2.700" fill="#8cc63a"/><rect x="488.200" y="505.400" width="2.700" height="2.700" fill="#20a4ef"/><rect x="491.600" y="505.400" width="2.700" height="2.700" fill="#ffb900"/>
<!-- youtube -->
<rect x="509.800" y="499.100" width="13.700" height="9.400" rx="2.600" fill="#f00"/><path d="M515 501.500l4 2.300l-4 2.300z" fill="#fff"/>
<!-- vscode -->
<path d="M544.500 497.600l4.400 1.800v8.800l-4.400 1.800l-7.800-6.200l-1.600 1.200l-0.800-0.700v-1l7.400-5.800z M544.700 500.800l-3.800 3l3.800 3z" fill="#2a8ad8" fill-rule="evenodd"/>
<path d="M534.300 501.200l0.800-0.700l1.600 1.200l2 1.600l-2 1.600l-2.400-2.700z" fill="#1a6fc0"/>
<!-- fusion -->
<rect x="560.900" y="497" width="13" height="14" rx="1.600" fill="#f26a0c"/><path d="M560.900 506.500h13v2.900q0 1.600-1.600 1.600h-9.800q-1.600 0-1.600-1.600z" fill="#a5410f"/>
<path d="M565.800 499.200h3.600v1.300h-2.100v1.400h1.800v1.300h-1.800v2.300h-1.500z" fill="#fff"/>
<rect x="565" y="507.800" width="4.800" height="1.300" fill="#e8b090"/>
<rect x="563" y="512.800" width="8.700" height="1.400" rx="0.700" fill="#1a7fd8"/>
<!-- tray -->
<path d="M648.800 505.600l3.300-3.600l3.300 3.600" fill="none" stroke="#222" stroke-width="0.900"/>
<g fill="none" stroke="#333" stroke-width="0.900"><path d="M666 502.500a4.400 4.400 0 0 1 7.600-1.200"/><path d="M674.400 504.700a4.400 4.400 0 0 1-7.600 1.600"/></g><path d="M674.600 499.500v2.600h-2.600zM666 508.500v-2.600h2.600z" fill="#333"/>
<circle cx="672.600" cy="506.100" r="2.200" fill="#f59a12"/>
<path d="M686.300 507q-2.600 0-2.600-2.200q0-2 2.200-2.200q0.600-2.200 3-2.200q2.300 0 3 2q2.200 0.200 2.200 2.300q0 2.300-2.400 2.300z" fill="#fafafa" stroke="#222" stroke-width="0.900"/>
<g fill="none" stroke="#8a949a" stroke-width="0.800"><path d="M702 502.200q4.600-3.600 9.200 0"/><path d="M703.600 504q3-2.400 6 0"/><path d="M705.200 505.700q1.400-1.100 2.800 0"/></g><circle cx="706.600" cy="507" r="0.600" fill="#8a949a"/>
<path d="M714.600 502.300h1.800l2.400-2v6.600l-2.400-2h-1.800z" fill="none" stroke="#333" stroke-width="0.800"/><path d="M720.300 501.500q1.700 2.100 0 4.200" fill="none" stroke="#9aa" stroke-width="0.700"/><path d="M721.800 500.300q2.600 3.300 0 6.600" fill="none" stroke="#b8c2c6" stroke-width="0.600"/>
<rect x="729.800" y="500.800" width="8.800" height="5.600" rx="1.200" fill="#222"/><rect x="738.600" y="502.500" width="1" height="2.200" fill="#222"/><path d="M731 500.800l1.200-1.400l1 1.400" fill="none" stroke="#222" stroke-width="0.700"/>
<path d="M789.100 499.800q2.900 0 2.900 3.300q0 2.400 1 3.600h-7.800q1-1.200 1-3.600q0-3.300 2.900-3.300z" fill="#2458c8"/><circle cx="789.100" cy="507.600" r="1.100" fill="#2458c8"/>
<!-- copilot -->
<path d="M806.500 497.500h5q2 0 2.600 2l0.400 1.300h0.800q1.800 0.200 1.500 2.400l-0.600 3.600q-0.500 3.200-3.400 3.200h-5q-2 0-2.600-2l-0.400-1.300h-0.600q-1.500-0.200-1.200-2.200l0.700-4q0.500-3 2.800-3z" fill="url(#cop)"/>
<rect x="808.500" y="505.500" width="8.500" height="4.500" rx="1" fill="#f5b51e"/>
</svg>
<span class="t" style="left:28.6px;top:496.7px;font-size:6.4px;font-weight:400;color:#1c1c1c;">64°F</span>
<span class="t" style="left:28.6px;top:504.8px;font-size:7.3px;font-weight:400;color:#6a6a6a;letter-spacing:-0.411px;">Clear</span>
<span class="t" style="left:296.6px;top:500.2px;font-size:8.3px;font-weight:400;color:#6a6a6a;letter-spacing:-0.6px;">Search</span>
<span class="t" style="left:751.4px;top:496px;font-size:7.2px;font-weight:400;color:#222;letter-spacing:-0.269px;">11:13 PM</span>
<span class="t" style="left:748.6px;top:504.7px;font-size:7.2px;font-weight:400;color:#222;letter-spacing:-0.104px;">8/14/2024</span>
<span class="t" style="left:809.600px;top:506px;font-size:3.600px;font-weight:700;color:#222">PRE</span>

</body></html>
